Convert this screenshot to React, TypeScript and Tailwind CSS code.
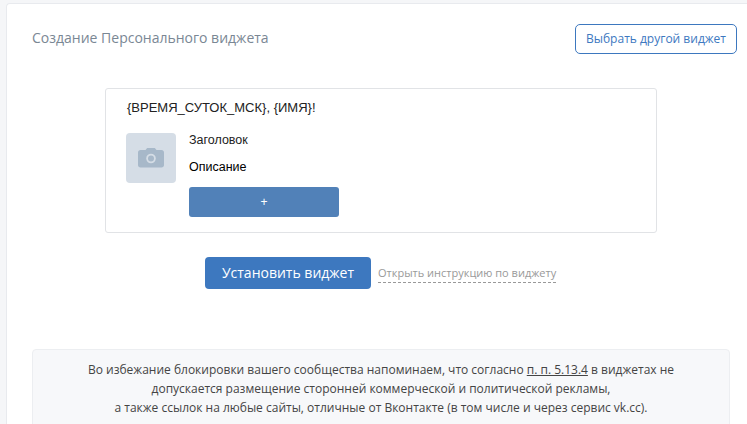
const openSans = { fontFamily: '"Open Sans", sans-serif' };

function CameraIcon() {
  return (
    <svg width="26" height="20" viewBox="0 0 26 20" className="fill-[#a7b8c9]">
      <path d="M8 1.5C8.3 .6 9 0 10 0h6c1 0 1.700.6 2 1.500L18.500 2H23.500C25 2 26 3 26 4.500V17c0 1.500-1 2.500-2.500 2.500H2.500C1 19.500 0 18.500 0 17V4.500C0 3 1 2 2.500 2H7.500z" />
      <circle cx="13" cy="10.500" r="4.800" fill="#d5dde6" />
      <circle cx="13" cy="10.500" r="3" fill="#a7b8c9" />
    </svg>
  );
}

function WidgetPreview() {
  return (
    <div className="ml-[98px] mt-[34px] w-[552px] h-[145px] rounded-[3px] border border-[#e1e3e6] pl-5 pt-[11px] font-['Liberation_Sans',sans-serif]">
      <div className="pl-px text-[13px] leading-4 text-[#222]">{'{ВРЕМЯ_СУТОК_МСК}, {ИМЯ}!'}</div>
      <div className="mt-[17px] flex">
        <div className="flex h-[50px] w-[50px] items-center justify-center rounded-sm bg-[#d5dde6]">
          <CameraIcon />
        </div>
        <div className="ml-[13px] w-[150px]">
          <div className="text-[12.5px] leading-[14px] text-[#222]">Заголовок</div>
          <div className="mt-[13px] text-[12.5px] leading-[14px] text-black">Описание</div>
          <div className="mt-[13px] flex h-[30px] items-center justify-center rounded-[3px] bg-[#5181b8] text-xs text-white">+</div>
        </div>
      </div>
    </div>
  );
}

export default function App() {
  return (
    <div className="h-[424px] w-[747px] overflow-hidden bg-[#f5f6f8] pl-[6px] pt-[3px]" style={openSans}>
      <div className="h-[480px] rounded-tl-[4px] border-t border-l border-[#e8eaee] bg-white">
        <div className="flex items-start justify-between pr-[10px] pl-[25px] pt-[20px]">
          <h1 className="pt-[4px] text-sm leading-[20px] font-normal text-[#7a8794]">Создание Персонального виджета</h1>
          <button className="h-[30px] w-[162px] rounded-[5px] border border-[#3d78bf] text-xs text-[#3d78bf]">Выбрать другой виджет</button>
        </div>
        <WidgetPreview />
        <div className="mt-6 flex items-center pl-[198px]">
          <button className="h-8 w-[166px] rounded-[4px] bg-[#3d78bf] text-sm text-white">Установить виджет</button>
          <a className="ml-[7px] border-b border-dashed border-[#999] pb-px text-[11px] leading-[17px] text-[#999]">Открыть инструкцию по виджету</a>
        </div>
        <div className="mt-[60px] ml-[25px] h-[100px] w-[698px] rounded-[4px] border border-[#eceef1] bg-[#f7f8fa] pt-[10px] text-center text-xs leading-[19px] text-[#444]">
          <p>
            Во избежание блокировки вашего сообщества напоминаем, что согласно <a className="underline">п. п. 5.13.4</a> в виджетах не
            <br />
            допускается размещение сторонней коммерческой и политической рекламы,
            <br />
            а также ссылок на любые сайты, отличные от Вконтакте (в том числе и через сервис vk.cc).
          </p>
        </div>
      </div>
    </div>
  );
}
